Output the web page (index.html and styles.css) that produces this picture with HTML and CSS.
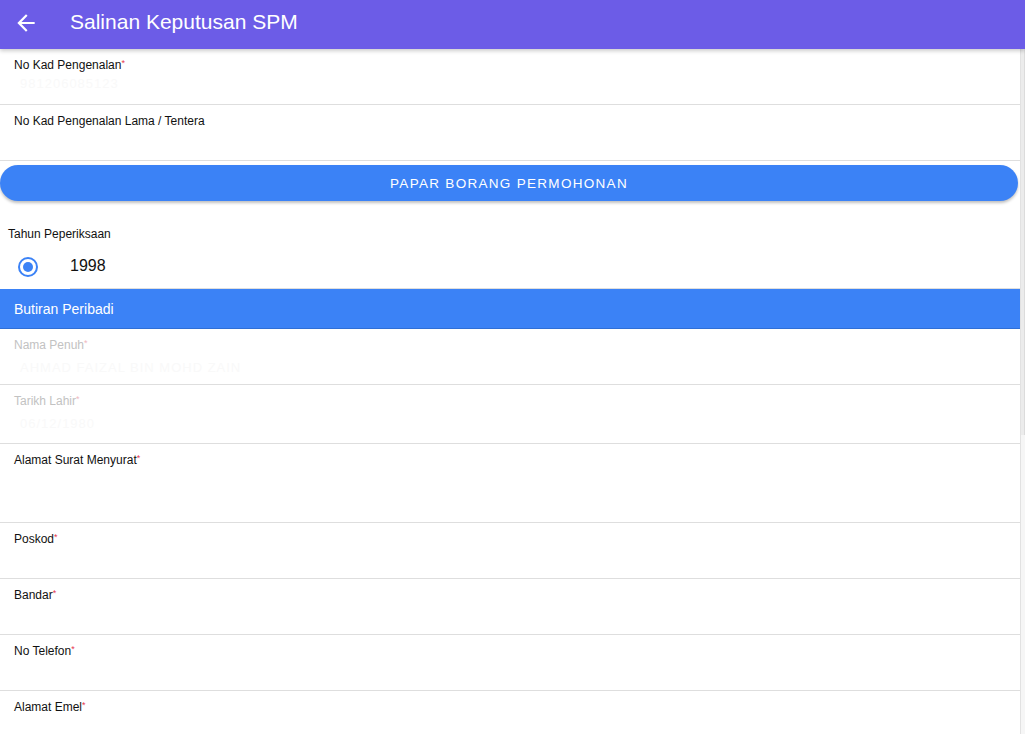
FILE: index.html
```html
<!DOCTYPE html>
<html lang="ms">
  <head>
    <meta charset="UTF-8" />
    <meta name="viewport" content="width=device-width, initial-scale=1.0" />
    <title>Salinan Keputusan SPM</title>
    <link rel="stylesheet" href="styles.css">
  </head>
  <body>
    <!-- Toolbar -->
    <header class="toolbar">
      <a href="javascript:history.back()" class="back-btn" aria-label="Kembali">
        <svg width="26" height="26" viewBox="0 0 24 24">
          <path d="M20 11H7.83l5.59-5.59L12 4l-8 8 8 8 1.41-1.41L7.83 13H20v-2z" fill="#fff" />
        </svg>
      </a>
      <h1>Salinan Keputusan SPM</h1>
    </header>

    <div class="page">
      <main class="content">
        <div class="field">
          <label>No Kad Pengenalan<span class="req">*</span></label>
          <div class="value">981206085123</div>
        </div>
        <div class="field">
          <label>No Kad Pengenalan Lama / Tentera</label>
          <div class="value"></div>
        </div>

        <button class="show-btn" type="button">PAPAR BORANG PERMOHONAN</button>

        <!-- Exam year -->
        <div class="year-group">
          <div class="year-title">Tahun Peperiksaan</div>
          <label class="radio-item">
            <span class="radio checked"><span class="dot"></span></span>
            <span class="radio-text">1998</span>
          </label>
        </div>

        <div class="section-head">Butiran Peribadi</div>

        <div class="field disabled">
          <label>Nama Penuh<span class="req">*</span></label>
          <div class="value">AHMAD FAIZAL BIN MOHD ZAIN</div>
        </div>
        <div class="field disabled tall">
          <label>Tarikh Lahir<span class="req">*</span></label>
          <div class="value">06/12/1980</div>
        </div>
        <div class="field area">
          <label>Alamat Surat Menyurat<span class="req">*</span></label>
          <div class="value"></div>
        </div>
        <div class="field">
          <label>Poskod<span class="req">*</span></label>
          <div class="value"></div>
        </div>
        <div class="field">
          <label>Bandar<span class="req">*</span></label>
          <div class="value"></div>
        </div>
        <div class="field">
          <label>No Telefon<span class="req">*</span></label>
          <div class="value"></div>
        </div>
        <div class="field last">
          <label>Alamat Emel<span class="req">*</span></label>
        </div>
      </main>

      <!-- scroll rail -->
      <div class="rail"><div class="thumb"></div></div>
    </div>
  </body>
</html>
```

FILE: styles.css
```css
* {
  margin: 0;
  padding: 0;
  box-sizing: border-box;
}

html,
body {
  height: 100%;
  overflow: hidden;
  font-family: "Liberation Sans", Arial, sans-serif;
  background: #fff;
  color: #111;
}

body {
  display: flex;
  flex-direction: column;
}

.toolbar {
  position: relative;
  z-index: 2;
  height: 49px;
  flex-shrink: 0;
  display: flex;
  align-items: center;
  background: #6c5ce7;
  box-shadow: 0 2px 4px rgba(0, 0, 0, 0.2);
}

.back-btn {
  display: flex;
  width: 52px;
  padding-left: 13px;
  margin-top: -4px;
}

.toolbar h1 {
  margin-left: 18px;
  font-size: 21px;
  font-weight: 400;
  color: #fff;
  margin-top: -5px;
}

.page {
  flex: 1;
  display: flex;
  min-height: 0;
}

.content {
  flex: 1;
  overflow: hidden;
}

.rail {
  width: 5px;
  background: #f6f6f6;
  border-left: 1px solid #e2e2e2;
}

.rail .thumb {
  height: 386px;
  background: #ececec;
  border-right: 1px solid #dcdcdc;
}

/* form rows */
.field {
  height: 56px;
  padding: 9px 14px 0;
  border-bottom: 1px solid #dedede;
}

.field label {
  display: block;
  font-size: 12px;
  line-height: 14px;
  color: #111;
}

.req {
  color: #e5374e;
  font-size: 9px;
  vertical-align: top;
  position: relative;
  top: -2px;
}

.field .value {
  margin-top: 4px;
  padding-left: 6px;
  font-size: 13px;
  line-height: 16px;
  color: #f9f9f9;
  letter-spacing: 1px;
}

.field.disabled label {
  color: #c2c2c2;
}

.field.disabled .req {
  color: #f0b8c0;
}

.field.disabled .value {
  margin-top: 8px;
}

.field.tall {
  height: 59px;
}

.field.area {
  height: 79px;
}

.field.last {
  border-bottom: none;
}

.show-btn {
  display: block;
  width: calc(100% - 2px);
  height: 36px;
  margin-top: 4px;
  border: none;
  border-radius: 18px;
  background: #3b82f6;
  color: #fff;
  font-family: inherit;
  font-size: 13.5px;
  letter-spacing: 1.3px;
  box-shadow: 0 2px 3px rgba(0, 0, 0, 0.25);
}

.year-group {
  padding-top: 26px;
}

.year-title {
  padding-left: 8px;
  font-size: 12px;
  line-height: 14px;
}

.radio-item {
  display: flex;
  align-items: center;
  height: 44px;
  margin-top: 4px;
}

.radio {
  width: 20px;
  height: 20px;
  margin-left: 18px;
  border: 2px solid #3b82f6;
  border-radius: 50%;
  display: flex;
  align-items: center;
  justify-content: center;
}

.radio .dot {
  width: 10px;
  height: 10px;
  border-radius: 50%;
  background: #3b82f6;
}

.radio-text {
  flex: 1;
  align-self: stretch;
  display: flex;
  align-items: center;
  margin-left: 32px;
  padding-bottom: 2px;
  font-size: 16px;
  border-bottom: 1px solid #dedede;
}

.section-head {
  height: 40px;
  padding-left: 14px;
  display: flex;
  align-items: center;
  background: #3b82f6;
  color: #fff;
  font-size: 14px;
  border-bottom: 1px solid #2f6fd6;
}
```
